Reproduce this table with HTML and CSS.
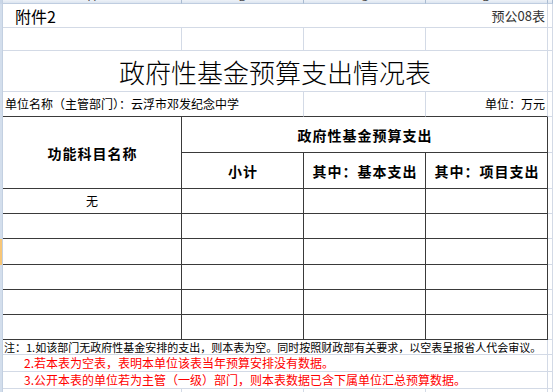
FILE: index.html
```html
<!DOCTYPE html>
<html lang="zh-CN">
<head>
<meta charset="utf-8">
<title>政府性基金预算支出情况表</title>
<link rel="stylesheet" href="styles.css">
</head>
<body>
<table class="sheet">
  <colgroup>
    <col class="c-rh"><col class="c-a"><col class="c-b"><col class="c-c"><col class="c-d"><col class="c-e">
  </colgroup>
  <tr class="r-ch">
    <td class="rh corner"></td>
    <td class="ch"><div class="ch-in"><span>A</span></div></td>
    <td class="ch"><div class="ch-in"><span>B</span></div></td>
    <td class="ch"><div class="ch-in"><span>C</span></div></td>
    <td class="ch"><div class="ch-in"><span>D</span></div></td>
    <td class="ch"><div class="ch-in"><span></span></div></td>
  </tr>
  <tr class="r1">
    <td class="rh"></td>
    <td colspan="4"><div class="r1-in"><span class="att">附件2</span><span class="code">预公08表</span></div></td>
    <td></td>
  </tr>
  <tr class="r2">
    <td class="rh"></td><td></td><td></td><td></td><td></td><td></td>
  </tr>
  <tr class="r3">
    <td class="rh"></td>
    <td colspan="4" class="title">政府性基金预算支出情况表</td>
    <td></td>
  </tr>
  <tr class="r4">
    <td class="rh"></td>
    <td colspan="2" class="unit tb">单位名称（主管部门）：云浮市邓发纪念中学</td>
    <td class="tb"></td>
    <td class="tb unit-r">单位：万元</td>
    <td></td>
  </tr>
  <tr class="h1">
    <td class="rh"></td>
    <td rowspan="2" class="t hd">功能科目名称</td>
    <td colspan="3" class="t hd">政府性基金预算支出</td>
    <td></td>
  </tr>
  <tr class="h2">
    <td class="rh"></td>
    <td class="t hd">小计</td>
    <td class="t hd">其中：基本支出</td>
    <td class="t hd">其中：项目支出</td>
    <td></td>
  </tr>
  <tr class="d">
    <td class="rh"></td><td class="t name">无</td><td class="t"></td><td class="t"></td><td class="t"></td><td></td>
  </tr>
  <tr class="d">
    <td class="rh"></td><td class="t"></td><td class="t"></td><td class="t"></td><td class="t"></td><td></td>
  </tr>
  <tr class="d d-tall">
    <td class="rh sel"></td><td class="t"></td><td class="t"></td><td class="t"></td><td class="t"></td><td></td>
  </tr>
  <tr class="d">
    <td class="rh"></td><td class="t"></td><td class="t"></td><td class="t"></td><td class="t"></td><td></td>
  </tr>
  <tr class="d">
    <td class="rh"></td><td class="t"></td><td class="t"></td><td class="t"></td><td class="t"></td><td></td>
  </tr>
  <tr class="d">
    <td class="rh"></td><td class="t"></td><td class="t"></td><td class="t"></td><td class="t"></td><td></td>
  </tr>
  <tr class="n1">
    <td class="rh"></td>
    <td colspan="4" class="note">注：1.如该部门无政府性基金安排的支出，则本表为空。同时按照财政部有关要求，以空表呈报省人代会审议。</td>
    <td></td>
  </tr>
  <tr class="n2">
    <td class="rh"></td>
    <td colspan="4" class="note red">2.若本表为空表，表明本单位该表当年预算安排没有数据。</td>
    <td></td>
  </tr>
  <tr class="n2">
    <td class="rh"></td>
    <td colspan="4" class="note red">3.公开本表的单位若为主管（一级）部门，则本表数据已含下属单位汇总预算数据。</td>
    <td></td>
  </tr>
  <tr class="n4">
    <td class="rh"></td><td></td><td></td><td></td><td></td><td></td>
  </tr>
</table>
</body>
</html>
```
FILE: styles.css
```css
html, body {
  margin: 0;
  padding: 0;
  background: #ffffff;
}
body {
  font-family: "Noto Sans CJK SC", "Noto Sans", sans-serif;
  color: #000000;
  overflow: hidden;
}
.sheet {
  border-collapse: separate;
  border-spacing: 0;
  table-layout: fixed;
  width: 553px;
}
.c-rh { width: 3px; }
.c-a { width: 179px; }
.c-b, .c-c, .c-d { width: 122px; }
.c-e { width: 5px; }

.sheet td {
  padding: 0;
  border-right: 1px solid #d3dae6;
  border-bottom: 1px solid #d3dae6;
  white-space: nowrap;
  overflow: visible;
  font-size: 12px;
  line-height: 14px;
  vertical-align: middle;
}

/* row header strip */
.sheet td.rh {
  background: #d3deec;
  border-right: 1px solid #c3d0e1;
  border-bottom: none;
}
.sheet td.rh.sel { background: #f7c677; }
.sheet td.rh.corner { background: #c9d6e7; }

/* column header strip */
.r-ch { height: 4px; }
.sheet td.ch {
  background: linear-gradient(#eef2f8, #dce5f0);
  border-right: 1px solid #a9bbd1;
  border-bottom: 1px solid #bfcde0;
  line-height: 0;
}
.ch-in {
  height: 3px;
  overflow: hidden;
  text-align: center;
}
.ch-in span {
  display: block;
  margin-top: -8px;
  font-family: "Liberation Sans", sans-serif;
  font-size: 11px;
  line-height: 11px;
  color: #4a4a4a;
}

.r1 { height: 24px; }
.r2 { height: 23px; }
.r3 { height: 41px; }
.r4 { height: 25px; }
.h1, .h2 { height: 36px; }
.d { height: 25px; }
.d-tall { height: 26px; }
.n1 { height: 15px; }
.n2 { height: 17px; }
.n4 { height: 20px; }

.r1-in {
  display: flex;
  justify-content: space-between;
  align-items: center;
  padding: 0 2px 0 12px;
}
.att {
  font-size: 16px;
  line-height: 18px;
}
.code {
  font-size: 13px;
  line-height: 15px;
  color: #333333;
}

.sheet td.title {
  font-size: 26px;
  font-weight: 300;
  line-height: 30px;
  text-align: center;
  padding-top: 2px;
}

.sheet td.tb { border-bottom: 1px solid #3a3a3a; }
.sheet td.unit { padding-left: 2px; }
.sheet td.unit-r { text-align: right; padding-right: 2px; }

.sheet td.t {
  border-right: 1px solid #3a3a3a;
  border-bottom: 1px solid #3a3a3a;
}
.sheet td.hd {
  font-weight: bold;
  font-size: 14px;
  line-height: 16px;
  letter-spacing: 1px;
  text-align: center;
  padding-left: 1px;
}
.sheet td.name { text-align: center; }

.sheet td.note {
  font-size: 11px;
  line-height: 13px;
  padding-left: 1px;
}
.sheet td.note.red {
  color: #ff0000;
  font-size: 12px;
  line-height: 14px;
  padding-left: 21px;
}
```
